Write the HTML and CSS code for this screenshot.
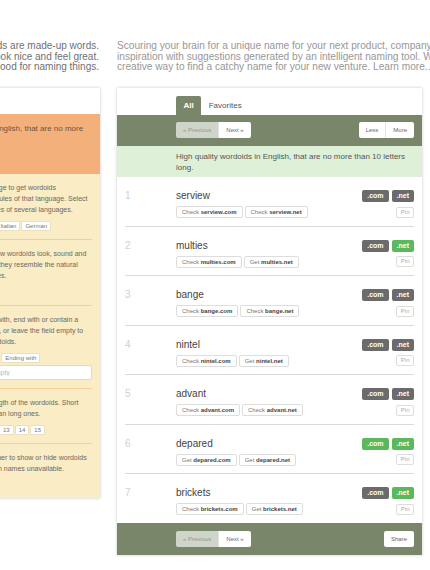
FILE: index.html
```html
<!DOCTYPE html>
<html lang="en">
<head>
<meta charset="utf-8">
<title>Wordoid</title>
<link rel="stylesheet" href="styles.css">
</head>
<body>
<div class="page">
  <div class="col-left">
    <p class="intro intro-left"><span class="ln">Wordoids are made-up words.</span><span class="ln">They look nice and feel great.</span><span class="ln">And they are good for naming things.</span></p>
    <div class="panel side">
      <div class="side-top"></div>
      <div class="side-preset"><span class="ln">All wordoids in English, that are no more</span><span class="ln">than 10 letters.</span></div>
      <div class="side-body">
        <div class="sec">
          <p class="help"><span class="ln">Choose the language to get wordoids</span><span class="ln">that will follow the rules of that language. Select</span><span class="ln">more to get the rules of several languages.</span></p>
          <div class="opts"><span class="opt">English</span><span class="opt">French</span><span class="opt">Italian</span><span class="opt">German</span></div>
        </div>
        <div class="sec">
          <p class="help"><span class="ln">Quality changes how wordoids look, sound and</span><span class="ln">feel. Better means they resemble the natural</span><span class="ln">sounds of languages.</span></p>
          <div class="opts"><span class="opt">Normal</span><span class="opt">High</span></div>
        </div>
        <div class="sec">
          <p class="help"><span class="ln">Let wordoids start with, end with or contain a</span><span class="ln">a given letter string, or leave the field empty to</span><span class="ln">get all random wordoids.</span></p>
          <div class="opts"><span class="opt">Any</span><span class="opt">Starting with</span><span class="opt">Ending with</span></div>
          <div class="field"><span class="addon">Pattern</span><input class="input" type="text" placeholder="Empty"></div>
        </div>
        <div class="sec">
          <p class="help"><span class="ln">Choose a good length of the wordoids. Short</span><span class="ln">words are better than long ones.</span></p>
          <div class="opts"><span class="opt">9</span><span class="opt">10</span><span class="opt">11</span><span class="opt">12</span><span class="opt">13</span><span class="opt">14</span><span class="opt">15</span></div>
        </div>
        <div class="sec">
          <p class="help"><span class="ln">Then choose whether to show or hide wordoids</span><span class="ln">with all their domain names unavailable.</span></p>
          <div class="opts"><span class="opt">Show</span><span class="opt">Hide</span></div>
        </div>
      </div>
    </div>
  </div>

  <div class="col-right">
    <p class="intro intro-right"><span class="ln">Scouring your brain for a unique name for your next product, company or website? Get</span><span class="ln">inspiration with suggestions generated by an intelligent naming tool. Wordoid is a fun and</span><span class="ln">creative way to find a catchy name for your new venture. Learn more...</span></p>
    <div class="panel main">
      <div class="tabs"><span class="tab active">All</span><span class="tab">Favorites</span></div>
      <div class="bar">
        <div class="btn-group"><span class="btn disabled">« Previous</span><span class="btn">Next »</span></div>
        <div class="btn-group"><span class="btn">Less</span><span class="btn">More</span></div>
      </div>
      <div class="desc">High quality wordoids in English, that are no more than 10 letters long.</div>
      <ol class="list">
        <li class="row"><span class="num">1</span><div class="body"><div class="line"><span class="name">serview</span><span class="badges"><span class="badge">.com</span><span class="badge">.net</span></span></div><div class="line"><span class="acts"><span class="act">Check <b>serview.com</b></span><span class="act">Check <b>serview.net</b></span></span><span class="pin">Pin</span></div></div></li>
        <li class="row"><span class="num">2</span><div class="body"><div class="line"><span class="name">multies</span><span class="badges"><span class="badge">.com</span><span class="badge ok">.net</span></span></div><div class="line"><span class="acts"><span class="act">Check <b>multies.com</b></span><span class="act">Get <b>multies.net</b></span></span><span class="pin">Pin</span></div></div></li>
        <li class="row"><span class="num">3</span><div class="body"><div class="line"><span class="name">bange</span><span class="badges"><span class="badge">.com</span><span class="badge">.net</span></span></div><div class="line"><span class="acts"><span class="act">Check <b>bange.com</b></span><span class="act">Check <b>bange.net</b></span></span><span class="pin">Pin</span></div></div></li>
        <li class="row"><span class="num">4</span><div class="body"><div class="line"><span class="name">nintel</span><span class="badges"><span class="badge">.com</span><span class="badge">.net</span></span></div><div class="line"><span class="acts"><span class="act">Check <b>nintel.com</b></span><span class="act">Get <b>nintel.net</b></span></span><span class="pin">Pin</span></div></div></li>
        <li class="row"><span class="num">5</span><div class="body"><div class="line"><span class="name">advant</span><span class="badges"><span class="badge">.com</span><span class="badge">.net</span></span></div><div class="line"><span class="acts"><span class="act">Check <b>advant.com</b></span><span class="act">Check <b>advant.net</b></span></span><span class="pin">Pin</span></div></div></li>
        <li class="row"><span class="num">6</span><div class="body"><div class="line"><span class="name">depared</span><span class="badges"><span class="badge ok">.com</span><span class="badge ok">.net</span></span></div><div class="line"><span class="acts"><span class="act">Get <b>depared.com</b></span><span class="act">Get <b>depared.net</b></span></span><span class="pin">Pin</span></div></div></li>
        <li class="row"><span class="num">7</span><div class="body"><div class="line"><span class="name">brickets</span><span class="badges"><span class="badge">.com</span><span class="badge ok">.net</span></span></div><div class="line"><span class="acts"><span class="act">Check <b>brickets.com</b></span><span class="act">Get <b>brickets.net</b></span></span><span class="pin">Pin</span></div></div></li>
      </ol>
      <div class="bar foot">
        <div class="btn-group"><span class="btn disabled">« Previous</span><span class="btn">Next »</span></div>
        <div class="btn-group"><span class="btn">Share</span></div>
      </div>
    </div>
  </div>
</div>
</body>
</html>
```

FILE: styles.css
```css
* { box-sizing: border-box; }

html, body {
  margin: 0;
  height: 100%;
  overflow: hidden;
}

body {
  font-family: "Liberation Sans", Arial, sans-serif;
  background: #fff;
}

.page {
  display: flex;
  gap: 17px;
  padding-top: 41px;
}

.col-left {
  flex: 0 0 168px;
  width: 168px;
  min-width: 0;
  margin-left: -68px;
}

.col-right {
  flex: 0 0 305px;
  width: 305px;
  min-width: 0;
}

.ln {
  display: block;
  white-space: nowrap;
}

.intro {
  margin: 0 0 15.5px;
  font-size: 10px;
  line-height: 10.5px;
}

.intro-left {
  text-align: right;
  color: #707070;
  padding-right: 1px;
}

.intro-right {
  font-size: 10.15px;
  color: #979797;
}

.panel {
  background: #fff;
  box-shadow: 0 0 3px rgba(0, 0, 0, 0.22);
}

/* left settings panel */
.side-top {
  height: 26px;
}

.side-preset {
  height: 60px;
  padding: 8.5px 8px 0;
  background: #f4b07a;
  font-size: 8px;
  line-height: 11px;
  color: #6a5546;
}

.side-body {
  background: #faecc5;
  padding: 0 8px;
}

.sec {
  padding: 8px 0;
  border-bottom: 1px solid #f2cf9c;
}

.sec:last-child {
  border-bottom: 0;
}

.help {
  margin: 0 0 6px;
  font-size: 7px;
  line-height: 11px;
  color: #6b6860;
}

.opts {
  display: flex;
  gap: 1px;
}

.opt {
  height: 10px;
  padding: 0 3px;
  border: 1px solid #ebdfbd;
  border-radius: 1px;
  background: #fff;
  font-size: 6px;
  line-height: 8px;
  color: #777;
  white-space: nowrap;
}

.field {
  display: flex;
  height: 15px;
  margin-top: 2px;
}

.addon {
  flex: 0 0 44px;
  border: 1px solid #e6d9b3;
  border-right: 0;
  border-radius: 2px 0 0 2px;
  background: #f3f3f3;
  font-size: 7px;
  line-height: 13px;
  color: #777;
  text-align: center;
}

.input {
  flex: 1;
  min-width: 0;
  height: 15px;
  margin: 0;
  padding: 0 5px;
  border: 1px solid #e6d9b3;
  border-radius: 0 2px 2px 0;
  background: #fff;
  font-family: "Liberation Sans", Arial, sans-serif;
  font-size: 7px;
  color: #555;
  outline: none;
}

.input::placeholder {
  color: #bdbdbd;
}

/* main results panel */
.tabs {
  display: flex;
  padding: 8px 8px 0 59px;
}

.tab {
  height: 19px;
  padding: 0 7.5px;
  font-size: 8px;
  line-height: 19px;
  color: #555;
}

.tab.active {
  background: #7a866a;
  color: #fff;
  font-weight: bold;
  border-radius: 2px 2px 0 0;
}

.bar {
  display: flex;
  justify-content: space-between;
  padding: 7px 8px 8px 59px;
  background: #7a866a;
}

.foot {
  padding-top: 8px;
}

.btn-group {
  display: flex;
  border-radius: 2px;
  overflow: hidden;
}

.btn {
  height: 16px;
  padding: 0 7px;
  background: #fff;
  font-size: 6px;
  line-height: 16px;
  color: #666;
  white-space: nowrap;
}

.btn + .btn {
  border-left: 1px solid #e3e3e3;
}

.btn.disabled {
  background: #cfd5ca;
  color: #8d9887;
}

.desc {
  padding: 4.5px 8px 4.5px 59px;
  background: #dff0d8;
  font-size: 8px;
  line-height: 11px;
  color: #555;
}

.list {
  list-style: none;
  margin: 0;
  padding: 0 8px;
}

.row {
  display: flex;
  padding: 13px 0 7.5px;
  border-bottom: 1px solid #dadada;
}

.row:last-child {
  border-bottom: 0;
}

.num {
  flex: 0 0 51px;
  font-size: 10px;
  line-height: 12px;
  color: #cfcfcf;
}

.body {
  flex: 1;
  display: flex;
  flex-direction: column;
  gap: 4px;
}

.line {
  display: flex;
  justify-content: space-between;
  align-items: center;
}

.name {
  font-size: 10px;
  line-height: 12px;
  color: #444;
}

.badges {
  display: flex;
  gap: 3px;
}

.badge {
  height: 12px;
  padding: 0 5px;
  border-radius: 2px;
  background: #6b6b6b;
  color: #fff;
  font-weight: bold;
  font-size: 7px;
  line-height: 12px;
}

.badge.ok {
  background: #5cb85c;
}

.acts {
  display: flex;
  gap: 2px;
}

.act {
  height: 12px;
  padding: 0 5px;
  border: 1px solid #ddd;
  border-radius: 2px;
  background: #fff;
  font-size: 6px;
  line-height: 10px;
  color: #777;
  white-space: nowrap;
}

.act b {
  color: #444;
}

.pin {
  height: 11px;
  padding: 0 3.5px;
  border: 1px solid #ddd;
  border-radius: 2px;
  background: #fff;
  font-size: 6px;
  line-height: 9px;
  color: #aaa;
}
```
